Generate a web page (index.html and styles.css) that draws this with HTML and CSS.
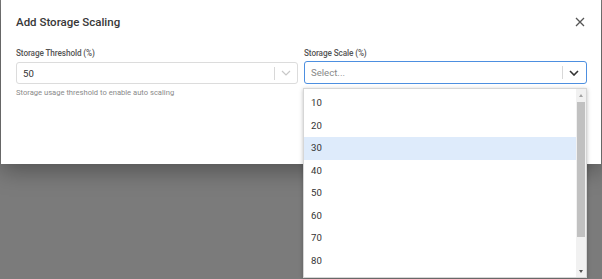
FILE: index.html
```html
<!DOCTYPE html>
<html>
<head>
<meta charset="utf-8">
<link rel="stylesheet" href="styles.css">
</head>
<body>
<div class="modal">
  <div class="header">
    <div class="title">Add Storage Scaling</div>
    <svg class="close" width="10" height="10" viewBox="0 0 10 10"><path d="M1 1L9 9M9 1L1 9" stroke="#555" stroke-width="1.3" fill="none"/></svg>
  </div>
  <div class="fields">
    <div class="field">
      <div class="label">Storage Threshold (%)</div>
      <div class="select">
        <span class="value">50</span>
        <span class="sep"></span>
        <svg class="chev light" width="10" height="6" viewBox="0 0 10 6"><path d="M1 1L5 5L9 1" stroke="#c8c8c8" stroke-width="1.2" fill="none"/></svg>
      </div>
      <div class="help">Storage usage threshold to enable auto scaling</div>
    </div>
    <div class="field open">
      <div class="label">Storage Scale (%)</div>
      <div class="select focus">
        <span class="placeholder">Select...</span>
        <span class="sep"></span>
        <svg class="chev" width="10" height="6" viewBox="0 0 10 6"><path d="M1 1L5 5L9 1" stroke="#333" stroke-width="1.6" fill="none"/></svg>
      </div>
      <div class="help">Percentage to increase storage by</div>
      <div class="menu">
        <div class="list">
          <div class="opt">10</div>
          <div class="opt">20</div>
          <div class="opt active">30</div>
          <div class="opt">40</div>
          <div class="opt">50</div>
          <div class="opt">60</div>
          <div class="opt">70</div>
          <div class="opt">80</div>
        </div>
        <div class="scrollbar">
          <div class="arrow up"></div>
          <div class="track"><div class="thumb"></div></div>
          <div class="arrow down"></div>
        </div>
      </div>
    </div>
  </div>
</div>
</body>
</html>
```
FILE: styles.css
```css
html, body {
  margin: 0;
  padding: 0;
}
body {
  background: #7b7b7b;
  width: 602px;
  height: 279px;
  overflow: hidden;
  font-family: Roboto, "Liberation Sans", sans-serif;
  color: #333;
}
.modal {
  margin-left: 1px;
  width: 600px;
  height: 164px;
  background: #fff;
  box-shadow: 0 6px 22px rgba(0,0,0,0.35);
  position: relative;
}
.header {
  height: 47px;
  display: flex;
  align-items: center;
  justify-content: space-between;
  padding: 0 16px 0 15px;
}
.title {
  font-size: 11.5px;
  font-weight: 500;
  color: #383838;
  margin-top: -3px;
}
.close {
  margin-top: -3px;
}
.fields {
  display: grid;
  grid-template-columns: 282px 283px;
  column-gap: 6px;
  padding: 0 14px 0 15px;
}
.field {
  position: relative;
}
.label {
  font-size: 8.2px;
  font-weight: 500;
  letter-spacing: -0.1px;
  color: #555;
  line-height: 12px;
  height: 12px;
  margin-bottom: 3px;
}
.select {
  height: 22px;
  border: 1px solid #dcdcdc;
  border-radius: 3px;
  display: flex;
  align-items: center;
  padding-left: 6px;
  box-sizing: border-box;
  font-size: 9.6px;
}
.select.focus {
  height: 23px;
  margin-top: -1px;
  border: 1.5px solid #4d8fe0;
}
.value {
  flex: 1;
  color: #333;
}
.placeholder {
  flex: 1;
  color: #888;
}
.sep {
  width: 1px;
  height: 13px;
  background: #d8d8d8;
}
.chev {
  margin: 0 7px 0 6px;
}
.chev.light {
  margin: 0 6px 0 6px;
}
.help {
  font-size: 7.6px;
  color: #8a8a8a;
  margin-top: 4px;
  line-height: 10px;
}
.menu {
  position: absolute;
  left: -1px;
  top: 41px;
  width: 284px;
  height: 190px;
  background: #fff;
  border: 1px solid #d6d6d6;
  box-sizing: border-box;
  box-shadow: 0 1px 4px rgba(0,0,0,0.25);
  display: flex;
  overflow: hidden;
  z-index: 5;
}
.list {
  flex: 1;
  padding-top: 3px;
  overflow: hidden;
}
.opt {
  height: 22.5px;
  line-height: 22.5px;
  padding-left: 7px;
  font-size: 9.6px;
  color: #333;
}
.opt.active {
  background: #deebfb;
}
.scrollbar {
  width: 10px;
  background: #f1f1f1;
  display: flex;
  flex-direction: column;
}
.arrow {
  height: 12px;
  display: flex;
  align-items: center;
  justify-content: center;
}
.arrow.up::before {
  content: "";
  border-left: 2.5px solid transparent;
  border-right: 2.5px solid transparent;
  border-bottom: 3px solid #a3a3a3;
}
.arrow.down::before {
  content: "";
  border-left: 2.5px solid transparent;
  border-right: 2.5px solid transparent;
  border-top: 3px solid #505050;
}
.track {
  flex: 1;
  padding: 1px 1px 0 1px;
}
.thumb {
  height: 135px;
  background: #c1c1c1;
}
```
